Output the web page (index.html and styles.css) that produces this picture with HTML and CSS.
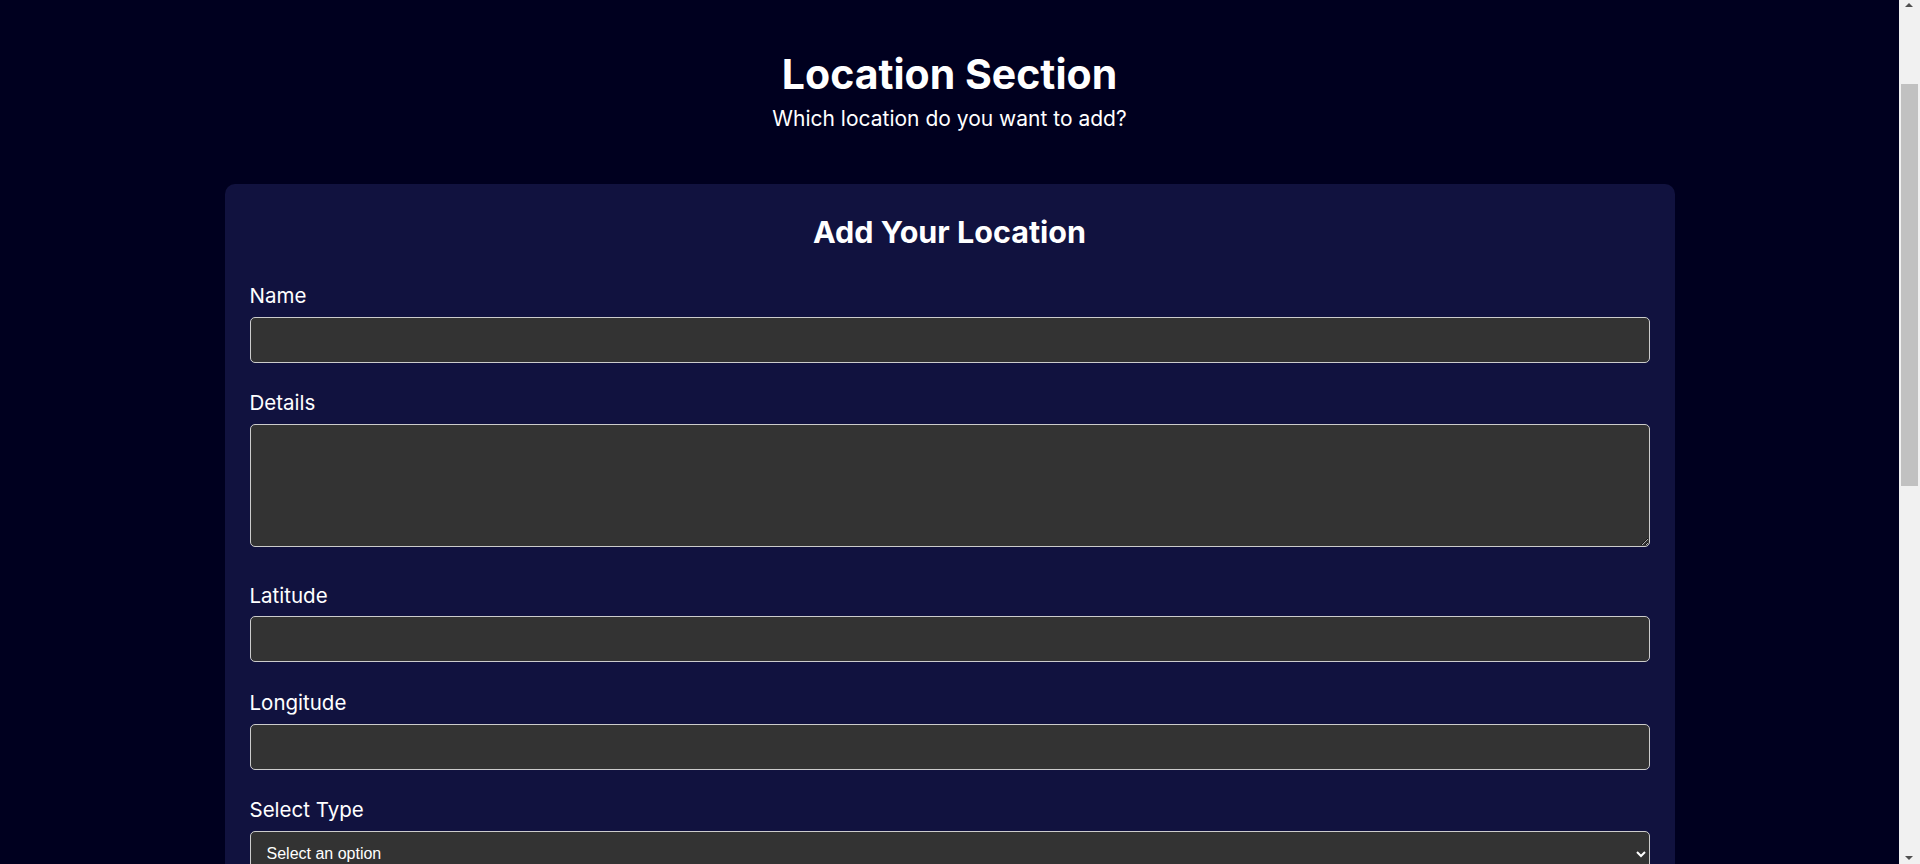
FILE: index.html
```html
<!DOCTYPE html>
<html lang="en">
<head>
<meta charset="utf-8">
<title>Location Section</title>
<link rel="stylesheet" href="styles.css">
</head>
<body>
<div class="page">
  <section class="location-section">
    <header class="section-header">
      <h1 class="section-title">Location Section</h1>
      <p class="section-subtitle">Which location do you want to add?</p>
    </header>
    <div class="form-card">
      <h2 class="form-title">Add Your Location</h2>
      <form class="location-form">
        <label class="field-label" for="name">Name</label>
        <input class="field-input" id="name" type="text">

        <label class="field-label" for="details">Details</label>
        <textarea class="field-input field-textarea" id="details"></textarea>

        <label class="field-label" for="lat">Latitude</label>
        <input class="field-input" id="lat" type="text">

        <label class="field-label" for="lng">Longitude</label>
        <input class="field-input" id="lng" type="text">

        <label class="field-label" for="type">Select Type</label>
        <select class="field-input field-select" id="type">
          <option>Select an option</option>
          <option>Restaurant</option>
          <option>Park</option>
          <option>Museum</option>
        </select>

        <button class="submit-btn" type="submit">Add Location</button>
      </form>
    </div>
  </section>
</div>
<div class="scrollbar" aria-hidden="true">
  <span class="scroll-arrow scroll-arrow-up"></span>
  <span class="scroll-thumb"></span>
  <span class="scroll-arrow scroll-arrow-down"></span>
</div>
</body>
</html>
```
FILE: styles.css
```css
* { box-sizing: border-box; }

html, body {
  margin: 0;
  background: #00001f;
  color: #ffffff;
  font-family: Inter, "Noto Sans", sans-serif;
}

.page {
  margin-right: 21px;
}

.location-section {
  padding: 49.5px 0 80px;
}

.section-header {
  text-align: center;
}

.section-title {
  margin: 0;
  font-size: 41px;
  line-height: 48px;
  font-weight: 700;
}

.section-subtitle {
  margin: 9.5px 0 0;
  font-size: 21px;
  line-height: 24px;
  font-weight: 400;
}

.form-card {
  width: 1450px;
  margin: 53px auto 0;
  padding: 29.5px 25px 30px;
  background: #11123f;
  border-radius: 10px;
}

.form-title {
  margin: 0 0 34.5px;
  text-align: center;
  font-size: 30.5px;
  line-height: 36px;
  font-weight: 700;
}

.location-form {
  display: flex;
  flex-direction: column;
}

.field-label {
  display: block;
  font-size: 20.5px;
  line-height: 24px;
  margin-bottom: 8.5px;
}

.field-input {
  display: block;
  width: 100%;
  height: 46px;
  margin: 0 0 28.8px;
  padding: 0 12px;
  background: #333333;
  color: #ffffff;
  border: 1px solid #cccccc;
  border-radius: 5px;
  font-family: "Liberation Sans", Arial, sans-serif;
  font-size: 16px;
}

.field-textarea {
  height: 123px;
  padding: 12px;
  margin-bottom: 37px;
}

.field-select {
  padding: 0 12px;
}

.submit-btn {
  align-self: flex-start;
  padding: 12px 24px;
  background: #4b4bd6;
  color: #ffffff;
  border: none;
  border-radius: 5px;
  font-family: Inter, "Noto Sans", sans-serif;
  font-size: 18px;
  font-weight: 600;
}

/* static scrollbar as it appears in the screenshot */
.scrollbar {
  position: fixed;
  top: 0;
  right: 0;
  width: 21px;
  height: 100vh;
  background: #f1f1f1;
}

.scroll-thumb {
  position: absolute;
  top: 84px;
  left: 2px;
  width: 17px;
  height: 402px;
  background: #c1c1c1;
}

.scroll-arrow {
  position: absolute;
  left: 6px;
  width: 0;
  height: 0;
  border-left: 4.5px solid transparent;
  border-right: 4.5px solid transparent;
}

.scroll-arrow-up {
  top: 3px;
  border-bottom: 4.5px solid #505050;
}

.scroll-arrow-down {
  bottom: 4px;
  border-top: 4.5px solid #505050;
}
```
